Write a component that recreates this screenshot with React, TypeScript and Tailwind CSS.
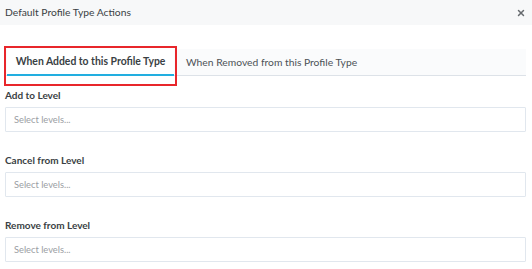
import { X } from 'lucide-react'

const fields = ['Add to Level', 'Cancel from Level', 'Remove from Level']

function LevelField({ label }: { label: string }) {
  return (
    <div className="flex flex-col">
      <label className="text-[10px] font-bold text-[#3a3f44] leading-[14px] h-[14px]">{label}</label>
      <div className="mt-[5px] h-[25px] border border-[#e1e7ee] rounded-[1px] flex items-center px-[8px] text-[9.3px] text-[#9a9ea3]">
        Select levels...
      </div>
    </div>
  )
}

export default function App() {
  return (
    <div className="relative w-[532px] h-[269px] bg-white overflow-hidden font-['Lato',sans-serif]">
      <div className="h-[25px] bg-[#f7f8f9] flex items-center justify-between pl-[5px] pr-[6px]">
        <span className="text-[10.3px] text-[#3a3f44]">Default Profile Type Actions</span>
        <X size={10} strokeWidth={3.5} className="text-[#666a6e]" />
      </div>

      <div className="px-[5px] pr-[6px]">
        <div className="mt-[24px] h-[27px] bg-[#fafbfc] border-b border-[#dde2e8] flex items-stretch">
          <div className="ml-[2px] w-[167px] bg-white border-b-2 border-[#22aee0] -mb-px flex items-center justify-center pt-px text-[10.4px] font-bold text-[#3a3f44]">
            When Added to this Profile Type
          </div>
          <div className="ml-[12px] flex items-center pt-px text-[10.3px] text-[#4d5257]">
            When Removed from this Profile Type
          </div>
        </div>

        <div className="mt-[12px] flex flex-col gap-[21px]">
          {fields.map(f => (
            <LevelField key={f} label={f} />
          ))}
        </div>
      </div>

      <div className="absolute left-[4px] top-[46px] w-[173px] h-[40px] border-2 border-[#e8262b]" />
    </div>
  )
}
